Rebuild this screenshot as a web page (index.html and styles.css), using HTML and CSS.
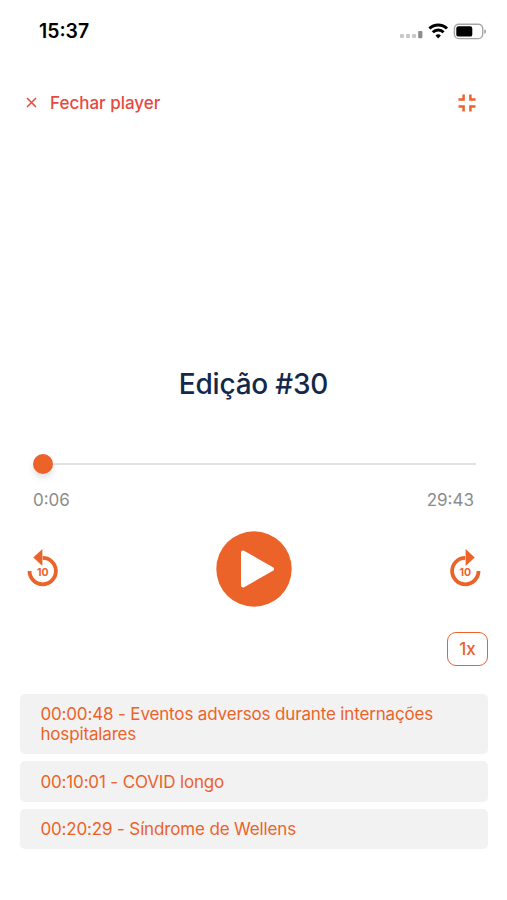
FILE: index.html
```html
<!DOCTYPE html>
<html lang="pt-BR">

<head>
  <meta charset="UTF-8">
  <meta name="viewport" content="width=device-width, initial-scale=1.0">
  <title>Edição #30</title>
  <link rel="stylesheet" href="styles.css">
</head>

<body>
  <div class="status-bar">
    <span class="clock">15:37</span>
    <svg class="status-icons" width="88" height="20" viewBox="0 0 88 20">
      <g fill="#c9c9c9">
        <rect x="1" y="13" width="4" height="4" rx="1" />
        <rect x="7" y="13" width="4" height="4" rx="1" />
        <rect x="13" y="13" width="4" height="4" rx="1" />
      </g>
      <rect x="19.2" y="10" width="4.2" height="7.2" rx="1" fill="#8c8c8c" />
      <g fill="none" stroke="#000" stroke-width="3">
        <path d="M30.4 7.5a12.6 12.6 0 0 1 17.6 0" />
        <path d="M33.8 11.2a7.7 7.7 0 0 1 10.8 0" />
      </g>
      <path d="M39.2 17.4l-2.7-2.8a3.8 3.8 0 0 1 5.4 0z" />
      <rect x="55.4" y="3.2" width="28.3" height="14.4" rx="4.3" fill="none" stroke="#a6a6a6" stroke-width="1.4" />
      <rect x="57.3" y="5.2" width="16" height="10.4" rx="2.2" />
      <path d="M85.2 8.2c2.6.8 2.6 3.8 0 4.6z" fill="#a6a6a6" />
    </svg>
  </div>

  <div class="top-bar">
    <button class="close">
      <svg width="11" height="11" viewBox="0 0 11 11">
        <path d="M1 1l9 9M10 1L1 10" fill="none" stroke="currentColor" stroke-width="1.5" />
      </svg>
      Fechar player
    </button>
    <button class="collapse" aria-label="Minimizar">
      <svg width="18" height="18" viewBox="0 0 18 18">
        <path d="M0.5 5.6H5.6V0.5M12.4 0.5V5.6H17.5M0.5 12.4H5.6V17.5M12.4 17.5V12.4H17.5" fill="none"
          stroke="currentColor" stroke-width="2.5" />
      </svg>
    </button>
  </div>

  <h1 class="title">Edição #30</h1>

  <div class="slider">
    <span class="thumb"></span>
    <span class="track"></span>
  </div>
  <div class="times">
    <span>0:06</span>
    <span>29:43</span>
  </div>

  <div class="controls">
    <button aria-label="Voltar 10 segundos">
      <svg width="32" height="44" viewBox="0 0 32 44">
        <path d="M2.5 24.1A13.2 13.2 0 1 0 15.7 10.9" fill="none" stroke="currentColor" stroke-width="3.8" />
        <path d="M6.3 10.4L15.4 2v17z" fill="currentColor" />
        <text class="skip-label" x="15.7" y="29.3">10</text>
      </svg>
    </button>
    <button aria-label="Reproduzir">
      <svg width="76" height="76" viewBox="0 0 76 76">
        <circle cx="38" cy="38" r="37.7" fill="currentColor" />
        <path d="M27 21.5v33L56 38z" fill="#fff" stroke="#fff" stroke-width="4" stroke-linejoin="round" />
      </svg>
    </button>
    <button aria-label="Avançar 10 segundos">
      <svg width="32" height="44" viewBox="0 0 32 44">
        <path d="M29.5 24.1A13.2 13.2 0 1 1 16.3 10.9" fill="none" stroke="currentColor" stroke-width="3.8" />
        <path d="M25.7 10.4L16.6 2v17z" fill="currentColor" />
        <text class="skip-label" x="16.3" y="29.3">10</text>
      </svg>
    </button>
  </div>

  <button class="speed">1x</button>

  <div class="chapters">
    <div class="chapter">00:00:48 - Eventos adversos durante internações hospitalares</div>
    <div class="chapter">00:10:01 - COVID longo</div>
    <div class="chapter">00:20:29 - Síndrome de Wellens</div>
  </div>
</body>

</html>
```

FILE: styles.css
```css
*,
*::before,
*::after {
  box-sizing: border-box;
}

:root {
  --orange: #ec632a;
  --red: #e8473f;
}

body {
  margin: 0;
  min-height: 900px;
  display: flex;
  flex-direction: column;
  background-color: #fff;
  font-family: Inter, sans-serif;
}

button {
  padding: 0;
  border: 0;
  background: none;
  color: var(--orange);
  font: inherit;
}

svg {
  display: block;
}

.status-bar {
  height: 62px;
  padding: 0 20px 0 39px;
  display: flex;
  align-items: center;
  justify-content: space-between;
}

.clock {
  font-size: 19.4px;
  font-weight: 600;
}

.top-bar {
  height: 81px;
  padding: 0 31.5px 0 26px;
  display: flex;
  align-items: center;
  justify-content: space-between;
}

.close {
  display: flex;
  align-items: center;
  gap: 13px;
  color: var(--red);
  font-size: 17px;
  font-weight: 500;
}

.title {
  margin: 221px 0 0;
  color: #14284b;
  font-size: 28px;
  font-weight: 500;
  letter-spacing: -0.2px;
  line-height: 40px;
  text-align: center;
}

.slider {
  height: 20px;
  margin: 50px 31px 0 33px;
  display: flex;
  align-items: center;
}

.thumb {
  width: 20px;
  height: 20px;
  border-radius: 50%;
  background-color: var(--orange);
  box-shadow: 0 4px 6px rgba(0, 0, 0, 0.12);
}

.track {
  flex: 1;
  height: 2px;
  background-color: #e2e2e2;
}

.times {
  margin: 16px 33px 0;
  display: flex;
  justify-content: space-between;
  color: #8c8c8c;
  font-size: 17px;
  line-height: 20px;
}

.controls {
  margin: 21px 26px 0 27px;
  display: flex;
  align-items: center;
  justify-content: space-between;
}

.skip-label {
  fill: currentColor;
  font-size: 10.5px;
  font-weight: 700;
  text-anchor: middle;
}

.speed {
  width: 41px;
  height: 34px;
  margin: 25px 19px 0 0;
  align-self: flex-end;
  border: 1.5px solid var(--orange);
  border-radius: 9px;
  font-size: 17px;
  font-weight: 500;
}

.chapters {
  margin: 27.5px 19px 0 20.4px;
  display: flex;
  flex-direction: column;
  gap: 7.2px;
}

.chapter {
  padding: 10.4px 20px 9.6px;
  border-radius: 5px;
  background-color: #f2f2f2;
  color: var(--orange);
  font-size: 17px;
  letter-spacing: -0.15px;
  line-height: 20.4px;
}
```
